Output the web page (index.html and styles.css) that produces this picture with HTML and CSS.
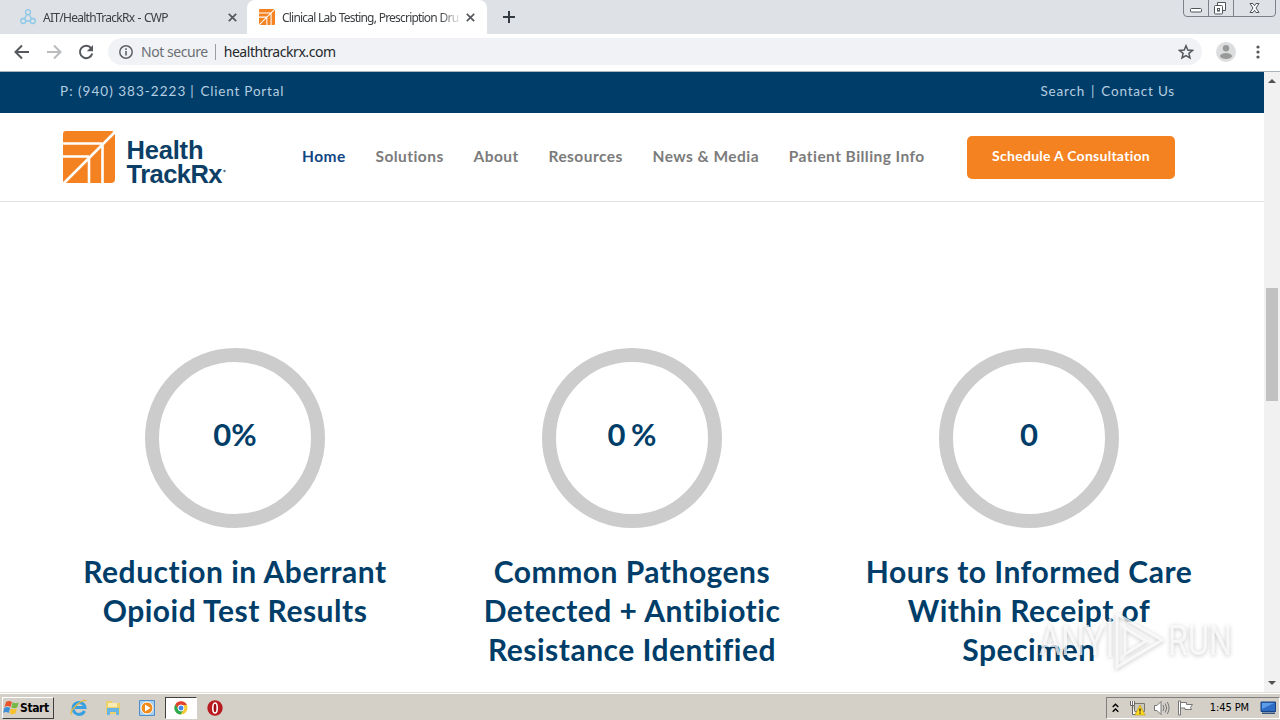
FILE: index.html
```
<!DOCTYPE html>
<html lang="en">
<head>
    <meta charset="UTF-8">
    <title>Clinical Lab Testing, Prescription Drug Monitoring</title>
    <link rel="stylesheet" href="styles.css">
</head>
<body>
    <div class="tab-strip">
        <div class="tab">
            <svg class="favicon" width="16" height="16" viewBox="0 0 16 16" fill="none" stroke="#8cc8e8" stroke-width="1.3"><circle cx="8" cy="3.2" r="2.5"/><circle cx="3.2" cy="12" r="2.5"/><circle cx="12.8" cy="12" r="2.5"/><path d="M7 5.5L4.5 9.7M9 5.5l2.5 4.2M5.7 12h4.6"/></svg>
            <span class="tab-title">AIT/HealthTrackRx - CWP</span>
            <svg class="close" width="9" height="9" viewBox="0 0 9 9"><path d="M.8.8l7.4 7.4M8.2.8L.8 8.2" stroke="#55585d" stroke-width="1.7"/></svg>
        </div>
        <div class="tab active">
            <svg class="favicon" width="16" height="16" viewBox="0 0 53 53"><rect width="53" height="53" rx="3" fill="#f58220"/><path d="M0 53L53 0M0 13h38M0 27h25M40 14v39M26 27v26" stroke="#fff" stroke-width="3.5"/></svg>
            <span class="tab-title">Clinical Lab Testing, Prescription Dru</span>
            <svg class="close" width="9" height="9" viewBox="0 0 9 9"><path d="M.8.8l7.4 7.4M8.2.8L.8 8.2" stroke="#55585d" stroke-width="1.7"/></svg>
        </div>
        <svg class="new-tab" width="12" height="12" viewBox="0 0 12 12"><path d="M6 0v12M0 6h12" stroke="#333a40" stroke-width="2"/></svg>
        <svg class="window-buttons" width="94" height="18" viewBox="0 0 94 18" fill="none" stroke="#7d828a">
            <path d="M.5 0v13q0 3.500 3.500 3.500H89q3.500 0 3.500-3.500V0M25.500 0v16.500M50.500 0v16.500"/>
            <rect x="7.500" y="8.500" width="11" height="3.500" rx="1" fill="#fff" stroke="#50545b"/>
            <path d="M34.500 5V2.500h8v8h-2.500" fill="#fff" stroke="#50545b"/>
            <rect x="31.500" y="5.500" width="8" height="8.500" rx="1" fill="#fff" stroke="#50545b"/>
            <rect x="34.500" y="8.500" width="2" height="2.500" stroke="#50545b"/>
            <path d="M67 3.500h3l1.500 2.200L73 3.500h3l-3 4.500 3 4.500h-3l-1.500-2.200-1.500 2.200h-3l3-4.500z" fill="#fff" stroke="#50545b"/>
        </svg>
    </div>

    <div class="toolbar">
        <svg width="16" height="16" viewBox="0 0 16 16" fill="none" stroke="#55585c" stroke-width="2"><path d="M15 8H2M8 1.500L1.500 8 8 14.500"/></svg>
        <svg width="16" height="16" viewBox="0 0 16 16" fill="none" stroke="#b9bbbd" stroke-width="2"><path d="M1 8h13M8 1.500L14.500 8 8 14.500"/></svg>
        <svg width="16" height="16" viewBox="0 0 16 16"><path d="M13.200 4.300A6.200 6.200 0 1 0 14.200 9.500" fill="none" stroke="#55585c" stroke-width="2"/><path d="M15 1v6.200H8.800z" fill="#55585c"/></svg>
        <div class="address">
            <svg width="14" height="14" viewBox="0 0 14 14"><circle cx="7" cy="7" r="6.200" fill="none" stroke="#5f6368" stroke-width="1.500"/><path d="M7 6v4.500M7 3.300v1.600" stroke="#5f6368" stroke-width="1.600"/></svg>
            <span class="not-secure">Not secure</span>
            <span class="divider"></span>
            <span class="url">healthtrackrx.com</span>
            <svg class="star" width="16" height="16" viewBox="0 0 16 16" fill="none" stroke="#55585c" stroke-width="1.500"><path d="M8 1.700l1.800 4.300 4.700.4-3.600 3 1.100 4.600L8 11.600 4 14l1.100-4.600-3.600-3 4.700-.4z"/></svg>
        </div>
        <svg class="avatar" width="20" height="20" viewBox="0 0 20 20"><circle cx="10" cy="10" r="10" fill="#dcdddf"/><circle cx="10" cy="6.200" r="3.200" fill="#999"/><ellipse cx="10" cy="14" rx="6" ry="3" fill="#999"/></svg>
        <svg class="menu" width="4" height="14" viewBox="0 0 4 14" fill="#55585c"><circle cx="2" cy="2" r="1.600"/><circle cx="2" cy="7" r="1.600"/><circle cx="2" cy="12" r="1.600"/></svg>
    </div>

    <div class="viewport">
        <div class="page">
            <div class="top-bar">
                <div class="top-links"><a class="phone">P: (940) 383-2223</a><span>|</span><a>Client Portal</a></div>
                <div class="top-links"><a>Search</a><span>|</span><a>Contact Us</a></div>
            </div>

            <header class="header">
                <svg class="logo" width="166" height="56" viewBox="0 0 166 56">
                    <path d="M4 1h45q4 0 4 4v44q0 4-4 4H1V4q0-3 3-3z" fill="#f58220"/>
                    <path d="M1 54L53 2M0 13.500h40M0 26.500h27M40.500 14v40M27 27v27" stroke="#fff" stroke-width="2.600" fill="none"/>
                    <text class="logo-text" x="64.500" y="28.500" textLength="77">Health</text>
                    <text class="logo-text" x="64.500" y="52.500" textLength="96">TrackRx</text>
                    <circle cx="162.500" cy="41" r="1.200" fill="#547590"/>
                </svg>
                <nav class="nav">
                    <a class="current">Home</a>
                    <a>Solutions</a>
                    <a>About</a>
                    <a>Resources</a>
                    <a>News &amp; Media</a>
                    <a>Patient Billing Info</a>
                </nav>
                <a class="button">Schedule A Consultation</a>
            </header>

            <main class="counters">
                <div class="counter">
                    <div class="circle">0%</div>
                    <h3>Reduction in Aberrant<br>Opioid Test Results</h3>
                </div>
                <div class="counter">
                    <div class="circle">0 %</div>
                    <h3>Common Pathogens<br>Detected + Antibiotic<br>Resistance Identified</h3>
                </div>
                <div class="counter">
                    <div class="circle">0</div>
                    <h3>Hours to Informed Care<br>Within Receipt of<br>Specimen</h3>
                </div>
            </main>
        </div>

        <div class="scrollbar">
            <svg width="8" height="4" viewBox="0 0 8 4"><path d="M0 4l4-4 4 4z" fill="#505050"/></svg>
            <div class="thumb"></div>
            <svg width="8" height="4" viewBox="0 0 8 4"><path d="M0 0l4 4 4-4z" fill="#505050"/></svg>
        </div>

        <svg class="watermark" width="204" height="66" viewBox="0 0 204 66">
            <g class="watermark-shape">
                <text x="2" y="46" textLength="66" lengthAdjust="spacingAndGlyphs">ANY</text>
                <path d="M73 10v38M80 5v53l45-27zM88 19v26l21-13z" fill="none" stroke="#fff" stroke-opacity=".75" stroke-width="3"/>
                <text x="131" y="46" textLength="64" lengthAdjust="spacingAndGlyphs">RUN</text>
            </g>
        </svg>
    </div>

    <div class="taskbar">
        <div class="start">
            <svg width="17" height="16" viewBox="0 0 17 16"><path d="M3 2q3-2 6 0L7.500 7q-3-2-6 0z" fill="#e8532b"/><path d="M9.800 2.300q3 2 6 0l-1.500 5q-3 2-6 0z" fill="#75b843"/><path d="M1.200 8q3-2 6 0l-1.500 5q-3-2-5.500 0z" fill="#3f8fd8"/><path d="M8 8.300q3 2 6 0l-1.500 5q-3 2-6 0z" fill="#f8c22c"/></svg>
            <span>Start</span>
        </div>
        <div class="launchers">
            <svg width="18" height="18" viewBox="0 0 18 18" fill="none"><path d="M14.500 12A6 6 0 1 1 15 8.500H5" stroke="#39a0e0" stroke-width="3"/><path d="M1.500 15.500C-1 11 13-1 16.500 2" stroke="#e8b83c" stroke-width="1.300"/></svg>
            <svg width="18" height="18" viewBox="0 0 18 18"><path d="M2 2h6l1 2h7v11H2z" fill="#ecd06a"/><path d="M4 4h9v4H4z" fill="#f8ecb4"/><path d="M3 9h12v7h-3v-3H6v3H3z" fill="#68b5e5"/></svg>
            <svg width="18" height="18" viewBox="0 0 18 18"><path d="M1.500 1.500h15v15h-15z" fill="#a8d0ee" stroke="#4c8ecb"/><circle cx="9" cy="9" r="6" fill="#f28b1d" stroke="#fff"/><path d="M7 5.500v7L12.500 9z" fill="#fff"/></svg>
        </div>
        <div class="task-active">
            <svg width="14" height="14" viewBox="0 0 14 14"><circle cx="7" cy="7" r="6.500" fill="#f8ca32"/><path d="M1.300 3.600A6.600 6.600 0 0 1 12.900 4H7L4.500 8.700z" fill="#e34133"/><path d="M1.300 3.600A6.600 6.600 0 0 0 6.600 13.600L9.500 8.800l-5-.4z" fill="#2da94f"/><circle cx="7" cy="7" r="3" fill="#4688f1" stroke="#fff"/></svg>
        </div>
        <svg width="16" height="16" viewBox="0 0 16 16"><circle cx="8" cy="8" r="7.700" fill="#b91b20"/><ellipse cx="8" cy="8" rx="2.200" ry="5" fill="#a00d12" stroke="#fff" stroke-width="1.600"/></svg>
        <div class="tray">
            <svg width="7" height="10" viewBox="0 0 7 10" fill="none" stroke="#000" stroke-width="1.400"><path d="M.7 4l2.800-2.800L6.300 4M.7 8.700l2.800-2.800 2.800 2.800"/></svg>
            <svg class="network" width="17" height="16" viewBox="0 0 17 16"><path d="M5.500 3.500h10v8h-10z" fill="#c9c9bd" stroke="#77776f"/><path d="M1.500 1v4.500h4V1M3.500 1v4M3.500 6v8.500h3" fill="#fff" stroke="#666"/><path d="M11 5l5 10H6z" fill="#ffda20" stroke="#bd9600" stroke-width=".6"/><path d="M11 8.500v3M11 12.500v1.200" stroke="#222" stroke-width="1.300"/></svg>
            <svg class="sound" width="17" height="16" viewBox="0 0 17 16" fill="none" stroke="#777"><path d="M1.500 5.500H4l4-4v13l-4-4H1.500z" fill="#fff"/><path d="M10 5q2 3 0 6M12.200 3.500q3 4.500 0 9M14.300 2q3.500 6 0 12"/></svg>
            <svg class="flag" width="17" height="16" viewBox="0 0 17 16" fill="#fff" stroke="#777"><path d="M1.500 1h2v14h-2zM3.500 2.500h6v2h6l-2 3 1 2H8v-1.500H3.500z"/></svg>
            <span class="clock">1:45 PM</span>
            <svg width="16" height="14" viewBox="0 0 16 14"><path d="M1 1h14.500v9.500H1z" fill="#2d6bc4" stroke="#174382"/><path d="M2 2h12L2 8z" fill="#5d9ce8"/><path d="M2 11.500h13V13H2z" fill="#34567f"/></svg>
        </div>
    </div>
</body>
</html>
```
FILE: styles.css
```
* {
    box-sizing: border-box;
}
body {
    margin: 0;
    width: 1280px;
    height: 720px;
    overflow: hidden;
    display: flex;
    flex-direction: column;
    background: #fff;
    font-family: "Noto Sans", sans-serif;
}
svg {
    display: block;
    flex-shrink: 0;
}
.tab-strip {
    height: 34px;
    background: #dee1e6;
    display: flex;
    align-items: center;
    flex-shrink: 0;
}
.tab {
    width: 247px;
    height: 34px;
    padding: 0 10px 0 20px;
    display: flex;
    align-items: center;
    font-size: 12px;
    color: #3c4043;
}
.tab.active {
    width: 240px;
    padding: 0 12px;
    background: #fff;
    border-radius: 8px 8px 0 0;
}
.tab-title {
    width: 177px;
    margin-left: 7px;
    white-space: nowrap;
    letter-spacing: -0.72px;
    word-spacing: 0.8px;
    -webkit-mask-image: linear-gradient(to right, #000 158px, transparent 180px);
}
.tab.active .tab-title {
    letter-spacing: -0.8px;
    word-spacing: 0.3px;
}
.close {
    margin-left: auto;
}
.new-tab {
    margin-left: 16px;
}
.window-buttons {
    margin-left: auto;
    margin-right: 3px;
    align-self: flex-start;
}
.toolbar {
    height: 38px;
    padding: 0 20px 2px 14px;
    display: flex;
    align-items: center;
    gap: 16px;
    flex-shrink: 0;
    border-bottom: 1px solid #a9b6bf;
}
.address {
    width: 1094px;
    height: 27px;
    margin-left: -2px;
    padding: 0 8px 0 11px;
    border-radius: 14px;
    background: #f0f2f5;
    display: flex;
    align-items: center;
    font-size: 14px;
}
.not-secure {
    margin-left: 8px;
    color: #6b6f74;
    letter-spacing: -0.45px;
}
.divider {
    width: 1px;
    height: 16px;
    margin: 0 8px 0 7px;
    background: #9a9da1;
}
.url {
    color: #26292c;
    letter-spacing: -0.45px;
}
.star {
    margin-left: auto;
}
.avatar {
    margin-left: -2px;
}
.menu {
    margin-left: auto;
}
.viewport {
    position: relative;
    height: 620px;
    display: flex;
    flex-shrink: 0;
    overflow: hidden;
}
.page {
    width: 1264px;
    font-family: Lato, sans-serif;
}
.top-bar {
    height: 41px;
    padding: 0 89px 3px 60px;
    display: flex;
    align-items: center;
    justify-content: space-between;
    background: #003e69;
    color: #b4cde0;
    font-size: 13.5px;
    letter-spacing: 0.8px;
}
.top-links {
    display: flex;
    gap: 6px;
}
.phone {
    margin-right: -2px;
    letter-spacing: 1.02px;
}
.header {
    height: 89px;
    padding: 2px 89px 0 62px;
    display: flex;
    align-items: center;
    border-bottom: 1px solid #e2e2e2;
}
.logo-text {
    font: bold 25.5px "Liberation Sans", sans-serif;
    fill: #0c3e66;
}
.nav {
    margin: 0 0 5px 74px;
    display: flex;
    gap: 29.8px;
    font-size: 15.5px;
    font-weight: 700;
    letter-spacing: 0.45px;
    color: #7b7b7b;
    white-space: nowrap;
}
.current {
    color: #124685;
}
.button {
    width: 208px;
    height: 43px;
    margin: 0 0 2px auto;
    padding-bottom: 3px;
    border-radius: 5px;
    background: #f58220;
    color: #fff;
    display: flex;
    align-items: center;
    justify-content: center;
    font-size: 14px;
    font-weight: 700;
    letter-spacing: 0.27px;
    white-space: nowrap;
}
.counters {
    padding: 146px 56px 0;
    display: flex;
    gap: 40px;
}
.counter {
    width: 357px;
    flex-shrink: 0;
    display: flex;
    flex-direction: column;
    align-items: center;
    color: #003e69;
}
.circle {
    width: 180px;
    height: 180px;
    padding: 0 0 9px 1px;
    border: 14px solid #ccc;
    border-radius: 50%;
    display: flex;
    align-items: center;
    justify-content: center;
    font-size: 31px;
    font-weight: 700;
    word-spacing: -2px;
}
.counter h3 {
    margin: 24px 0 0 1px;
    font-size: 30px;
    line-height: 39px;
    font-weight: 700;
    letter-spacing: 0.5px;
    text-align: center;
    white-space: nowrap;
}
.scrollbar {
    width: 16px;
    padding: 7px 2px;
    display: flex;
    flex-direction: column;
    align-items: center;
    background: #f1f1f1;
}
.thumb {
    width: 12px;
    height: 113px;
    margin: 205px 0 auto;
    background: #c1c1c1;
}
.watermark {
    position: absolute;
    left: 1037px;
    top: 537px;
}
.watermark-shape {
    font: 400 42px "Roboto", sans-serif;
    fill: rgba(255, 255, 255, 0.75);
    filter: drop-shadow(0 1px 2px rgba(0, 0, 0, 0.3));
}
.taskbar {
    height: 28px;
    padding: 2px 0 0 2px;
    display: flex;
    align-items: center;
    flex-shrink: 0;
    background: #d4d0c8;
    border-top: 1px solid #e2dfd8;
    box-shadow: inset 0 1px #fff;
}
.start {
    width: 52px;
    height: 22px;
    display: flex;
    align-items: center;
    border: 1px solid;
    border-color: #fff #404040 #404040 #fff;
    font: bold 12px "DejaVu Sans Condensed", sans-serif;
    letter-spacing: -0.4px;
}
.launchers {
    display: flex;
    gap: 16px;
    margin: 0 9px 0 16px;
}
.task-active {
    width: 32px;
    height: 22px;
    margin-right: 10px;
    display: flex;
    align-items: center;
    justify-content: center;
    background: #fff;
    border: 1px solid;
    border-color: #404040 #fff #fff #404040;
}
.tray {
    width: 174px;
    height: 22px;
    margin: 0 0 0 auto;
    padding: 0 3px 0 5px;
    display: flex;
    align-items: center;
    border: 1px solid;
    border-color: #808080 #fff #fff #808080;
}
.network {
    margin-left: 10px;
}
.sound,
.flag {
    margin-left: 7px;
}
.clock {
    margin: 0 11px 0 auto;
    font: 11px "DejaVu Sans Condensed", sans-serif;
    letter-spacing: -0.1px;
    white-space: nowrap;
}
```
